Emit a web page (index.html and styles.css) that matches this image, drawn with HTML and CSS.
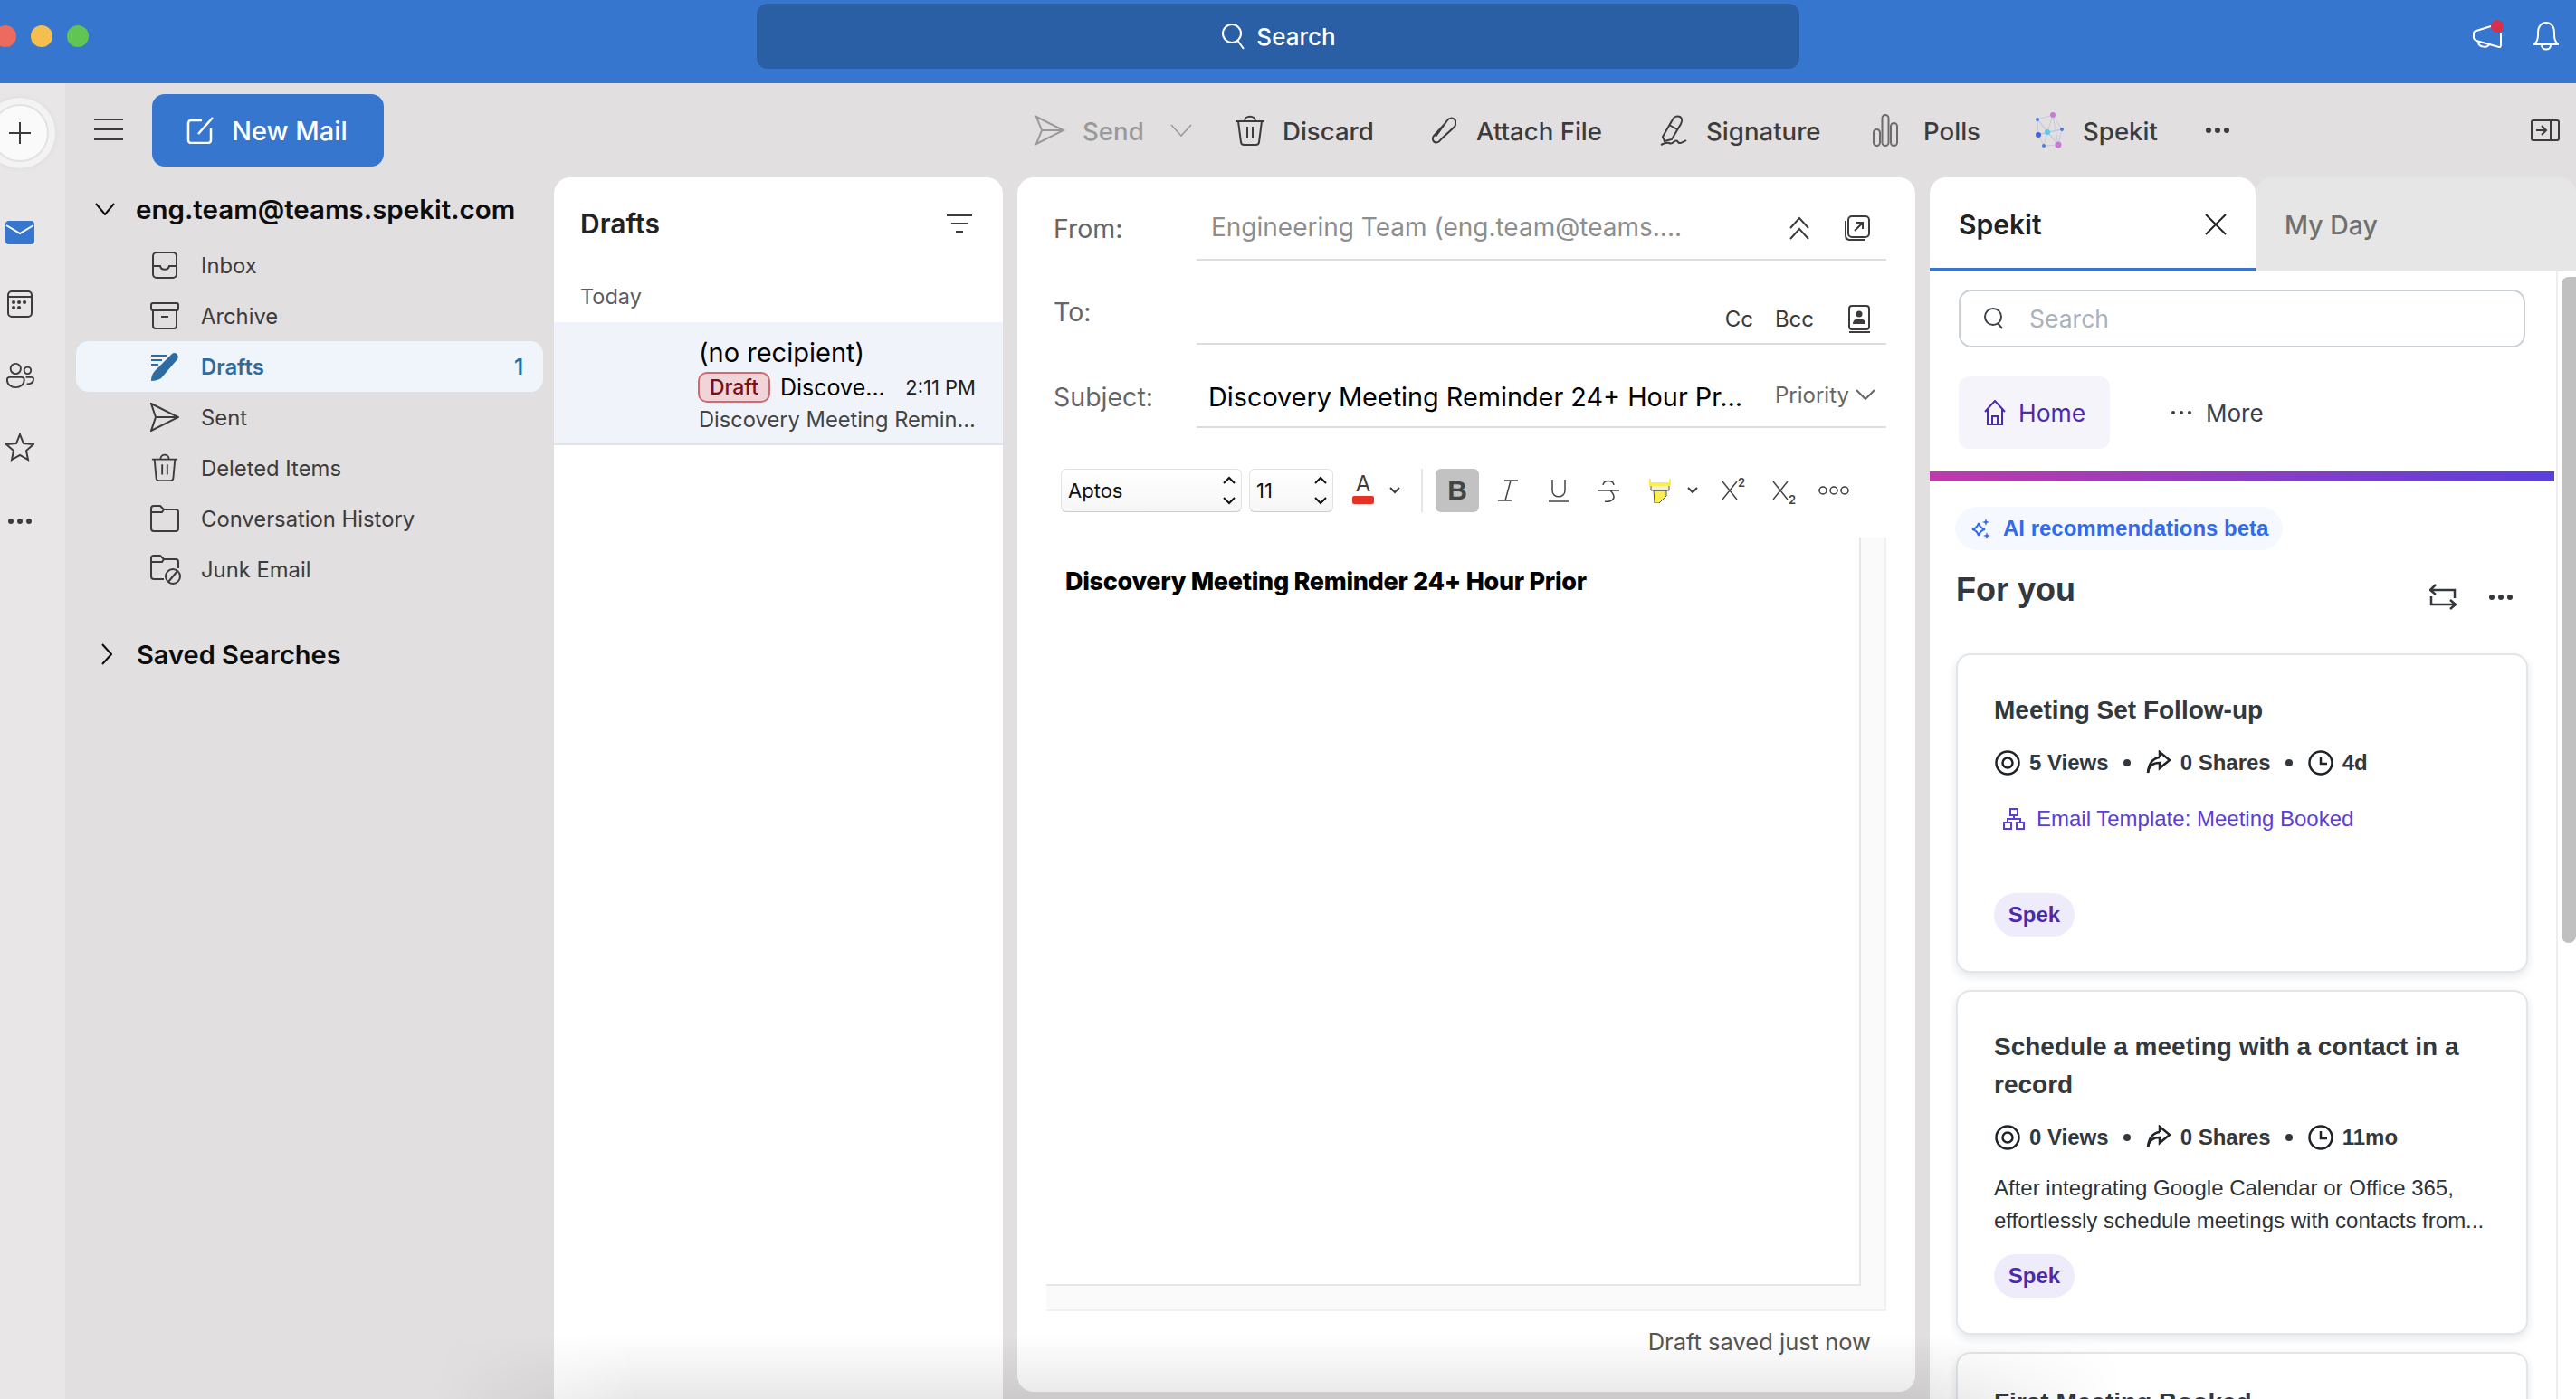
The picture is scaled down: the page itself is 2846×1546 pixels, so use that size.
FILE: index.html
```html
<!DOCTYPE html>
<html lang="en">
<head>
    <meta charset="UTF-8">
    <meta name="viewport" content="width=device-width, initial-scale=1.0">
    <title>Mail - Drafts</title>
    <link rel="stylesheet" href="styles.css">
</head>
<body>
<div class="app">
    <!-- Title bar -->
    <header class="titlebar">
        <div class="lights">
            <span class="light red"></span>
            <span class="light yellow"></span>
            <span class="light green"></span>
        </div>
        <div class="top-search">
            <svg class="ic ic-30" viewBox="0 0 30 30"><circle cx="13" cy="12" r="10"/><path d="M19.5 20L26 29"/></svg>
            <span>Search</span>
        </div>
        <div class="top-icons">
            <div class="megaphone">
                <svg class="ic ic-34" viewBox="0 0 34 26"><path d="M20 2L4 7c-2 .5-3 2-3 3v5c0 1 1 2 3 3l25 7c1 .2 2-.5 2-2V10"/><path d="M6 19c0 7 11 7 12 3"/></svg>
                <span class="megaphone-dot"></span>
            </div>
            <svg class="ic ic-bell" viewBox="0 0 28 32"><path d="M1 25c3-3 4-5 4-10V12C5 5 9 1 14 1s9 4 9 11v3c0 5 1 7 4 10z"/><path d="M9 26c0 6 10 6 10 0"/></svg>
        </div>
    </header>

    <div class="main">
        <!-- App rail -->
        <nav class="rail">
            <div class="plus">
                <svg class="ic ic-24" viewBox="0 0 24 24"><path d="M12 0v24M0 12h24"/></svg>
            </div>
            <svg class="rail-icon" viewBox="0 0 32 32"><rect class="mail-fill" x="0" y="3" width="32" height="26" rx="4"/><path class="mail-v" d="M1 8l15 9 15-9"/></svg>
            <svg class="ic rail-icon" viewBox="0 0 32 32"><rect x="3" y="2" width="26" height="28" rx="4"/><path d="M3 8h26"/><path class="dots" d="M9 14h.1M15 14h.1M21 14h.1M9 20h.1M15 20h.1"/></svg>
            <svg class="ic rail-icon" viewBox="0 0 34 32"><circle cx="12" cy="8" r="6"/><circle cx="26" cy="10" r="4"/><path d="M2 21c0-2 1-3 3-3h14c2 0 3 1 3 3 0 6-5 9-10 9S2 27 2 21z"/><path d="M24 18h6c2 0 3 1 3 2 0 4-3 6-8 6"/></svg>
            <svg class="ic rail-icon" viewBox="0 0 32 32"><path d="M16 2l4 10 11 1-8 7 2 10-9-5-9 5 2-10-8-7 11-1z"/></svg>
            <div class="dots-h rail-dots"><i></i><i></i><i></i></div>
        </nav>

        <div class="content">
            <!-- Ribbon -->
            <div class="ribbon">
                <svg class="ic hamburger" viewBox="0 0 32 24"><path d="M0 1h32M0 12h32M0 23h32"/></svg>
                <button class="new-mail">
                    <svg class="ic new-mail-icon" viewBox="0 0 30 30"><path d="M17 4H5a3 3 0 0 0-3 3v19a3 3 0 0 0 3 3h19a3 3 0 0 0 3-3V13"/><path d="M13 19L29 1"/></svg>
                    <span>New Mail</span>
                </button>
                <div class="tool tool-send">
                    <svg class="ic ic-34" viewBox="0 0 34 34"><path d="M2 2l30 15L2 32l6-15zM8 17h24"/></svg>
                    <span>Send</span>
                    <svg class="ic send-caret" viewBox="0 0 24 14"><path d="M1 1l11 12L23 1"/></svg>
                </div>
                <div class="tool tool-discard">
                    <svg class="ic ic-34" viewBox="0 0 34 34"><path d="M1 7h32M11 7c0-7 12-7 12 0"/><path d="M4 7l3 23c.200 2 1.500 3 3.500 3h13c2 0 3.300-1 3.500-3l3-23"/><path d="M14 13v13M20 13v13"/></svg>
                    <span>Discard</span>
                </div>
                <div class="tool tool-attach">
                    <svg class="ic ic-28" viewBox="0 0 28 30"><path d="M5 22L18 4c2-3 6-3 8-1s2 5 0 8L11 25c-2 3-5 4-7 3s-3-4-1-7L16 7"/></svg>
                    <span>Attach File</span>
                </div>
                <div class="tool tool-signature">
                    <svg class="ic ic-34" viewBox="0 0 34 34"><path d="M5 24L16 5c2-4 6-4 8-3s3 4 1 8L15 27l-8 2zM12 11l9 5"/><path d="M3 33c4-2 7-3 9-2s3 1 5-1 4-2 5 0 4 1 9-2"/></svg>
                    <span>Signature</span>
                </div>
                <div class="tool tool-polls">
                    <svg class="ic ic-polls" viewBox="0 0 28 36"><rect x="1" y="17" width="7" height="18" rx="3.500"/><rect x="10.500" y="1" width="7" height="34" rx="3.500"/><rect x="20" y="10" width="7" height="25" rx="3.500"/></svg>
                    <span>Polls</span>
                </div>
                <div class="tool tool-spekit">
                    <svg class="spekit-logo" viewBox="0 0 34 40">
                        <path class="net" d="M3 8L20 3 30 19 26 36 10 37 4 25zM3 8l11 14 16-3M20 3L14 22 10 37M4 25l10-3 12 14M3 8l23 28M20 3l6 33M4 25L30 19"/>
                        <circle class="dot-pink" cx="20" cy="3" r="3"/>
                        <circle class="dot-blue" cx="3" cy="8" r="2"/>
                        <circle class="dot-blue" cx="30" cy="19" r="2"/>
                        <circle class="dot-dark" cx="4" cy="25" r="3"/>
                        <circle class="dot-cyan" cx="14" cy="22" r="3"/>
                        <circle class="dot-pink" cx="26" cy="36" r="3.500"/>
                        <circle class="dot-blue" cx="10" cy="37" r="2"/>
                    </svg>
                    <span>Spekit</span>
                </div>
                <div class="dots-h tool-more"><i></i><i></i><i></i></div>
                <svg class="ic panel-toggle" viewBox="0 0 32 24"><rect x="1" y="1" width="30" height="22" rx="2"/><path d="M22 1v22M6 12h11M12 7l5 5-5 5"/></svg>
            </div>

            <div class="panes">
                <!-- Folder tree -->
                <aside class="folders">
                    <div class="account">
                        <svg class="ic account-chevron" viewBox="0 0 22 14"><path d="M1 1l10 12L21 1"/></svg>
                        <span>eng.team@teams.spekit.com</span>
                    </div>
                    <ul class="folder-list">
                        <li class="folder">
                            <svg class="ic ic-32" viewBox="0 0 32 32"><rect x="3" y="2" width="26" height="28" rx="4"/><path d="M3 17h8c1 5 9 5 10 0h8"/></svg>
                            <span>Inbox</span>
                        </li>
                        <li class="folder">
                            <svg class="ic ic-32" viewBox="0 0 32 32"><rect x="1" y="2" width="30" height="8" rx="2"/><path d="M3 10v17a3 3 0 0 0 3 3h20a3 3 0 0 0 3-3V10M12 17h8"/></svg>
                            <span>Archive</span>
                        </li>
                        <li class="folder active">
                            <svg class="ic-32 drafts-icon" viewBox="0 0 32 32"><path d="M1 3h17v2H1zM1 8h12v2H1zM1 13h8v2H1z"/><path d="M24 2c2-2 5-1 6 1s1 3 0 5L12 29c-3 2-7 3-11 3 0-4 1-8 4-11z"/></svg>
                            <span>Drafts</span>
                            <b class="count">1</b>
                        </li>
                        <li class="folder">
                            <svg class="ic ic-32" viewBox="0 0 32 32"><path d="M1 1l30 15L1 31l5-15zM6 16h25"/></svg>
                            <span>Sent</span>
                        </li>
                        <li class="folder">
                            <svg class="ic ic-32" viewBox="0 0 32 34"><path d="M1 7h30M11 7c0-7 10-7 10 0"/><path d="M4 7l2 22c.200 2 1.500 3 3.500 3h13c2 0 3.300-1 3.500-3l2-22"/><path d="M13 13v12M19 13v12"/></svg>
                            <span>Deleted Items</span>
                        </li>
                        <li class="folder">
                            <svg class="ic ic-32" viewBox="0 0 32 32"><path d="M1 5a3 3 0 0 1 3-3h7l4 4h13a3 3 0 0 1 3 3v18a3 3 0 0 1-3 3H4a3 3 0 0 1-3-3zM1 9h12l2-3"/></svg>
                            <span>Conversation History</span>
                        </li>
                        <li class="folder">
                            <svg class="ic ic-32 junk-icon" viewBox="0 0 34 34"><path d="M15 28H4a3 3 0 0 1-3-3V5a3 3 0 0 1 3-3h7l4 4h13a3 3 0 0 1 3 3v7M1 9h12l2-3"/><circle cx="25" cy="25" r="8"/><path d="M20 31l10-12"/></svg>
                            <span>Junk Email</span>
                        </li>
                    </ul>
                    <div class="account saved">
                        <svg class="ic saved-chevron" viewBox="0 0 12 24"><path d="M1 1l10 11L1 23"/></svg>
                        <span>Saved Searches</span>
                    </div>
                </aside>

                <!-- Message list -->
                <section class="list-pane">
                    <div class="list-head">
                        <h2>Drafts</h2>
                        <svg class="ic filter-icon" viewBox="0 0 28 20"><path d="M0 1h28M5 10h18M10 19h8"/></svg>
                    </div>
                    <div class="list-group">Today</div>
                    <div class="msg">
                        <div class="msg-to">(no recipient)</div>
                        <div class="msg-line">
                            <span class="draft-tag">Draft</span>
                            <span class="msg-subject">Discove...</span>
                            <span class="msg-time">2:11 PM</span>
                        </div>
                        <div class="msg-preview">Discovery Meeting Remin...</div>
                    </div>
                </section>

                <!-- Compose -->
                <section class="compose">
                    <div class="row row-from">
                        <label class="row-label">From:</label>
                        <div class="row-field">
                            <span class="from-value">Engineering Team (eng.team@teams....</span>
                            <svg class="ic double-up" viewBox="0 0 24 26"><path d="M2 13L12 2l10 11M2 25l10-11 10 11"/></svg>
                            <svg class="ic popout" viewBox="0 0 28 28"><rect x="4" y="1" width="23" height="23" rx="4"/><path d="M1 6v16c0 3 2 5 5 5h16M11 17l9-9M13 8h7v7"/></svg>
                        </div>
                    </div>
                    <div class="row row-to">
                        <label class="row-label">To:</label>
                        <div class="row-field">
                            <span class="cc">Cc</span>
                            <span class="bcc">Bcc</span>
                            <svg class="contact" viewBox="0 0 24 32"><rect class="contact-box" x="1" y="1" width="22" height="26" rx="3"/><path class="contact-line" d="M1 30h23"/><circle cx="12" cy="10" r="3.500"/><path d="M5 21c0-4 3-6 7-6s7 2 7 6z"/></svg>
                        </div>
                    </div>
                    <div class="row row-subject">
                        <label class="row-label">Subject:</label>
                        <div class="row-field">
                            <span class="subject-value">Discovery Meeting Reminder 24+ Hour Pr...</span>
                            <span class="priority">Priority</span>
                            <svg class="ic priority-caret" viewBox="0 0 22 12"><path d="M1 1l10 10L21 1"/></svg>
                        </div>
                    </div>

                    <div class="format-bar">
                        <div class="select select-font">
                            <span>Aptos</span>
                            <svg class="ic stepper" viewBox="0 0 14 32"><path d="M1 8l6-6 6 6M1 24l6 6 6-6"/></svg>
                        </div>
                        <div class="select select-size">
                            <span>11</span>
                            <svg class="ic stepper" viewBox="0 0 14 32"><path d="M1 8l6-6 6 6M1 24l6 6 6-6"/></svg>
                        </div>
                        <div class="font-color">
                            <span>A</span>
                            <i class="color-swatch"></i>
                        </div>
                        <svg class="ic mini-caret caret-color" viewBox="0 0 12 8"><path d="M1 1l5 5 5-5"/></svg>
                        <i class="format-sep"></i>
                        <div class="fmt-bold">B</div>
                        <svg class="ic fmt-icon fmt-italic" viewBox="0 0 24 26"><path d="M8 2h15M1 24h15M15 2L9 24"/></svg>
                        <svg class="ic fmt-icon fmt-under" viewBox="0 0 22 26"><path d="M4 1v12c0 9 14 9 14 0V1M0 25h22"/></svg>
                        <svg class="ic fmt-icon fmt-strike" viewBox="0 0 24 26"><path d="M0 13h24M18 7c-1-6-11-6-12 0M8 25c5 1 10-1 10-5 0-3-2-5-4-7"/></svg>
                        <svg class="highlighter" viewBox="0 0 24 28"><path class="hl-yellow" d="M0 1h2v4h20V1h2v8H0z"/><path class="hl-body" d="M2 9h20v5H2z"/><path class="hl-yellow" d="M5 14h14v6l-8 8H6z"/><path class="hl-line" d="M5 14h14v6l-8 8H6zM2 9v5h20V9"/></svg>
                        <svg class="ic mini-caret caret-hl" viewBox="0 0 12 8"><path d="M1 1l5 5 5-5"/></svg>
                        <div class="fmt-script fmt-sup">
                            <svg class="ic script-x" viewBox="0 0 18 20"><path d="M1 0l16 20M17 0L1 20"/></svg>
                            <span>2</span>
                        </div>
                        <div class="fmt-script fmt-sub">
                            <svg class="ic script-x" viewBox="0 0 18 20"><path d="M1 0l16 20M17 0L1 20"/></svg>
                            <span>2</span>
                        </div>
                        <svg class="ic fmt-more" viewBox="0 0 34 10"><circle cx="5" cy="5" r="4"/><circle cx="17" cy="5" r="4"/><circle cx="29" cy="5" r="4"/></svg>
                    </div>

                    <div class="editor-frame">
                        <div class="editor-body">
                            <p>Discovery Meeting Reminder 24+ Hour Prior</p>
                        </div>
                    </div>
                    <div class="draft-status">Draft saved just now</div>
                </section>

                <!-- Side panel -->
                <section class="side">
                    <div class="side-tabs">
                        <div class="side-tab current">
                            <span>Spekit</span>
                            <svg class="ic tab-close" viewBox="0 0 24 24"><path d="M1 1l22 22M23 1L1 23"/></svg>
                        </div>
                        <div class="side-tab other">My Day</div>
                    </div>
                    <div class="side-body">
                        <div class="side-main">
                            <div class="side-search">
                                <svg class="ic side-search-icon" viewBox="0 0 22 24"><circle cx="10" cy="10" r="9"/><path d="M15 17l5 6"/></svg>
                                <span>Search</span>
                            </div>
                            <div class="side-nav">
                                <div class="side-home">
                                    <svg class="ic home-icon" viewBox="0 0 24 28"><path d="M1 13L12 1l11 12M4 10v17h16V10M9 27v-9h6v9"/></svg>
                                    <span>Home</span>
                                </div>
                                <div class="side-more">
                                    <div class="dots-h small-dots"><i></i><i></i><i></i></div>
                                    <span>More</span>
                                </div>
                            </div>
                            <div class="grad-bar"></div>
                            <div class="ai-pill">
                                <svg class="ai-icon" viewBox="0 0 22 24"><path d="M9 6c1 4 3 6 7 7-4 1-6 3-7 7-1-4-3-6-7-7 4-1 6-3 7-7z"/><path class="ai-solid" d="M17 1l1 3 3 1-3 1-1 3-1-3-3-1 3-1zM18 16l1 3 3 1-3 1-1 3-1-3-3-1 3-1z"/></svg>
                                <span>AI recommendations beta</span>
                            </div>
                            <div class="for-you">
                                <h3>For you</h3>
                                <svg class="ic loop-icon" viewBox="0 0 30 30"><path d="M2 7h26v9M28 23H2v-9M7 1L1 7l6 5M23 18l6 5-6 5"/></svg>
                                <div class="dots-h for-you-dots"><i></i><i></i><i></i></div>
                            </div>

                            <article class="card">
                                <h4>Meeting Set Follow-up</h4>
                                <div class="meta">
                                    <svg class="ic meta-icon" viewBox="0 0 28 28"><circle cx="14" cy="14" r="12.500"/><circle cx="14" cy="14" r="5.500"/></svg>
                                    <span class="views">5 Views</span>
                                    <i class="bullet"></i>
                                    <svg class="ic meta-icon" viewBox="0 0 28 28"><path d="M2 25c1-8 6-11 13-11v6L26 11 15 2v6"/><path d="M15 8C7 9 3 15 2 25"/></svg>
                                    <span class="shares">0 Shares</span>
                                    <i class="bullet"></i>
                                    <svg class="ic meta-icon" viewBox="0 0 28 28"><circle cx="14" cy="14" r="12.500"/><path d="M14 7v8h7"/></svg>
                                    <span>4d</span>
                                </div>
                                <div class="card-link">
                                    <svg class="ic link-icon" viewBox="0 0 24 24"><rect x="8" y="1" width="8" height="7"/><rect x="1" y="16" width="8" height="7"/><rect x="15" y="16" width="8" height="7"/><path d="M12 8v4M5 16v-4h14v4"/></svg>
                                    <span>Email Template: Meeting Booked</span>
                                </div>
                                <span class="spek-tag">Spek</span>
                            </article>

                            <article class="card card-second">
                                <h4>Schedule a meeting with a contact in a record</h4>
                                <div class="meta">
                                    <svg class="ic meta-icon" viewBox="0 0 28 28"><circle cx="14" cy="14" r="12.500"/><circle cx="14" cy="14" r="5.500"/></svg>
                                    <span class="views">0 Views</span>
                                    <i class="bullet"></i>
                                    <svg class="ic meta-icon" viewBox="0 0 28 28"><path d="M2 25c1-8 6-11 13-11v6L26 11 15 2v6"/><path d="M15 8C7 9 3 15 2 25"/></svg>
                                    <span class="shares">0 Shares</span>
                                    <i class="bullet"></i>
                                    <svg class="ic meta-icon" viewBox="0 0 28 28"><circle cx="14" cy="14" r="12.500"/><path d="M14 7v8h7"/></svg>
                                    <span>11mo</span>
                                </div>
                                <p class="card-desc">After integrating Google Calendar or Office 365, effortlessly schedule meetings with contacts from...</p>
                                <span class="spek-tag">Spek</span>
                            </article>

                            <article class="card card-third">
                                <h4>First Meeting Booked</h4>
                            </article>
                        </div>
                        <div class="scroll-track"><div class="scroll-thumb"></div></div>
                    </div>
                </section>
            </div>
        </div>
    </div>
    <div class="bottom-shade"></div>
</div>
</body>
</html>
```

FILE: styles.css
```css
* {
    box-sizing: border-box;
}

html, body {
    margin: 0;
    height: 100%;
    overflow: hidden;
}

body {
    font-family: Inter, "Noto Sans", sans-serif;
    color: #3d3b3c;
    background-color: #e1dfe0;
}

h2, h3, h4, p, ul {
    margin: 0;
    padding: 0;
}

ul {
    list-style: none;
}

.app {
    position: relative;
    display: flex;
    flex-direction: column;
    height: 1546px;
    overflow: hidden;
}

/* generic icon */
.ic {
    fill: none;
    stroke: currentColor;
    stroke-width: 2;
    flex-shrink: 0;
}

.ic-24 { width: 24px; height: 24px; }
.ic-28 { width: 28px; height: 30px; }
.ic-30 { width: 30px; height: 30px; }
.ic-32 { width: 32px; height: 32px; }
.ic-34 { width: 34px; height: 34px; }

.dots-h {
    display: flex;
    gap: 6px;
}

.dots-h i {
    width: 6px;
    height: 6px;
    border-radius: 50%;
    background-color: #3d3b3c;
}

/* title bar */
.titlebar {
    display: flex;
    align-items: center;
    height: 92px;
    flex-shrink: 0;
    padding-bottom: 12px;
    background-color: #3676cf;
}

.lights {
    display: flex;
    gap: 16px;
    width: 98px;
    margin-left: -6px;
    flex-shrink: 0;
}

.light {
    width: 24px;
    height: 24px;
    border-radius: 50%;
    flex-shrink: 0;
}

.light.red { background-color: #ed6a5e; }
.light.yellow { background-color: #f5bf4f; }
.light.green { background-color: #61c554; }

.top-search {
    display: flex;
    align-items: center;
    justify-content: center;
    gap: 10px;
    width: 1152px;
    height: 72px;
    margin-left: 744px;
    border-radius: 12px;
    background-color: #2a5fa5;
    color: #fff;
    font-size: 26px;
    font-weight: 500;
}

.top-icons {
    display: flex;
    align-items: center;
    gap: 33px;
    margin-left: auto;
    margin-right: 19px;
    color: #fff;
}

.megaphone {
    position: relative;
    display: flex;
}

.megaphone .ic {
    height: 26px;
}

.megaphone-dot {
    position: absolute;
    top: -5px;
    right: 0;
    width: 14px;
    height: 14px;
    border-radius: 50%;
    background-color: #d7304b;
}

.ic-bell {
    width: 28px;
    height: 32px;
}

/* main area */
.main {
    display: flex;
    flex: 1;
    min-height: 0;
}

.rail {
    display: flex;
    flex-direction: column;
    width: 72px;
    flex-shrink: 0;
    padding-top: 23px;
    background-color: #e8e6e7;
}

.plus {
    display: flex;
    align-items: center;
    justify-content: center;
    width: 64px;
    height: 64px;
    margin-left: -10px;
    margin-bottom: 62px;
    border: 2px solid #e2e2e2;
    border-radius: 50%;
    background-color: #fafafa;
    box-shadow: 0 0 0 7px #f4f3f3, 0 0 6px 8px rgba(0, 0, 0, 0.04);
}

.rail-icon {
    width: 32px;
    height: 32px;
    margin: 0 0 47px 6px;
}

.mail-fill {
    fill: #3676cf;
}

.mail-v {
    fill: none;
    stroke: #fff;
    stroke-width: 2;
}

.rail .dots {
    stroke-width: 4;
    stroke-linecap: round;
}

.rail-dots {
    margin: 16px 0 0 9px;
    gap: 4px;
}

.content {
    display: flex;
    flex-direction: column;
    flex: 1;
    min-width: 0;
}

/* ribbon */
.ribbon {
    display: flex;
    align-items: center;
    height: 104px;
    flex-shrink: 0;
    padding-left: 32px;
    font-size: 27.600px;
    font-weight: 500;
}

.hamburger {
    width: 32px;
    height: 24px;
    margin-top: -2px;
}

.new-mail {
    display: flex;
    align-items: center;
    gap: 20px;
    width: 256px;
    height: 80px;
    margin-left: 32px;
    padding: 0 0 0 38px;
    border: none;
    border-radius: 14px;
    background-color: #3676cf;
    color: #fff;
    font-family: inherit;
    font-size: 29px;
    font-weight: 500;
}

.new-mail-icon {
    width: 30px;
    height: 30px;
    stroke-width: 2.500;
}

.tool {
    display: flex;
    align-items: center;
    gap: 19px;
    flex-shrink: 0;
}

.tool span {
    margin-top: 2px;
}

.tool-send {
    width: 221px;
    margin-left: 719px;
    color: #999;
}

.send-caret {
    width: 24px;
    height: 14px;
    margin-left: 10px;
    stroke-width: 1.500;
}

.tool-discard { width: 217px; }
.tool-attach { width: 251px; gap: 22px; }
.tool-signature { width: 237px; }
.tool-polls { width: 179px; gap: 28px; }
.tool-spekit { width: 189px; }

.ic-polls { width: 28px; height: 36px; color: #6e6c6d; }

.spekit-logo {
    width: 34px;
    height: 40px;
}

.net {
    fill: none;
    stroke: #b5b8d8;
    stroke-width: 0.600;
}

.dot-pink { fill: #c87ad6; }
.dot-blue { fill: #4a7ae0; }
.dot-dark { fill: #3f63e0; }
.dot-cyan { fill: #5cc8ea; }

.tool-more {
    gap: 4px;
}

.panel-toggle {
    width: 32px;
    height: 24px;
    margin-left: auto;
    margin-right: 18px;
}

/* panes */
.panes {
    display: flex;
    flex: 1;
    min-height: 0;
}

.folders {
    width: 540px;
    flex-shrink: 0;
    padding-top: 7px;
}

.account {
    display: flex;
    align-items: center;
    height: 56px;
    margin-bottom: 6px;
    padding-left: 33px;
    color: #0d0d0d;
    font-size: 29.500px;
    font-weight: 600;
}

.account span {
    margin-left: 23px;
}

.account-chevron {
    width: 22px;
    height: 14px;
}

.folder {
    display: flex;
    align-items: center;
    gap: 24px;
    height: 56px;
    margin-left: 12px;
    width: 516px;
    padding-left: 82px;
    padding-right: 22px;
    border-radius: 14px;
    font-size: 23.800px;
}

.folder.active {
    background-color: #f0f5fb;
    color: #2d6ba3;
    font-weight: 600;
}

.drafts-icon {
    fill: #2d6ba3;
}

.count {
    margin-left: auto;
    font-weight: 600;
}

.junk-icon {
    width: 34px;
    height: 34px;
    margin-right: -2px;
}

.account.saved {
    margin-top: 38px;
    padding-left: 40px;
    font-size: 29px;
}

.saved span {
    margin-left: 27px;
}

.saved-chevron {
    width: 12px;
    height: 24px;
}

/* message list */
.list-pane {
    display: flex;
    flex-direction: column;
    width: 496px;
    flex-shrink: 0;
    border-radius: 18px 18px 0 0;
    background-color: #fff;
}

.list-head {
    display: flex;
    align-items: center;
    justify-content: space-between;
    height: 102px;
    padding: 0 34px 0 29px;
}

.list-head h2 {
    color: #222;
    font-size: 30px;
    font-weight: 600;
}

.filter-icon {
    width: 28px;
    height: 20px;
}

.list-group {
    height: 58px;
    padding: 13px 0 0 29px;
    color: #5e5c5d;
    font-size: 23.500px;
    line-height: 34px;
}

.msg {
    height: 136px;
    padding: 16px 30px 0 162px;
    border-bottom: 2px solid #e0e4e6;
    background-color: #f0f4fa;
    color: #000;
}

.msg-to {
    margin-left: -2px;
    font-size: 29px;
    line-height: 36px;
}

.msg-line {
    display: flex;
    align-items: center;
    margin-left: -3px;
    margin-top: 3px;
    height: 34px;
}

.draft-tag {
    display: flex;
    align-items: center;
    justify-content: center;
    width: 80px;
    height: 34px;
    border: 2px solid #cf6a72;
    border-radius: 10px;
    background-color: #f0d4d8;
    color: #7a1018;
    font-size: 23px;
    font-weight: 500;
}

.msg-subject {
    margin-left: 11px;
    font-size: 25px;
}

.msg-time {
    margin-left: auto;
    font-size: 22px;
    color: #222;
}

.msg-preview {
    margin-top: 2px;
    margin-left: -2px;
    color: #444;
    font-size: 23.700px;
    line-height: 34px;
    white-space: nowrap;
}

/* compose */
.compose {
    display: flex;
    flex-direction: column;
    width: 992px;
    height: 1342px;
    flex-shrink: 0;
    margin-left: 16px;
    margin-right: 16px;
    padding: 0 32px 0 40px;
    border-radius: 18px;
    background-color: #fff;
}

.row {
    display: flex;
    height: 92px;
    flex-shrink: 0;
}

.row-label {
    width: 158px;
    flex-shrink: 0;
    color: #666;
    font-size: 28.500px;
    line-height: 36px;
}

.row-from .row-label { padding-top: 39px; }
.row-to .row-label { padding-top: 39px; }
.row-subject .row-label { padding-top: 40px; }

.row-to { height: 93px; }

.row-field {
    display: flex;
    align-items: center;
    flex: 1;
    border-bottom: 2px solid #ddd;
}

.row-from .row-field { padding-top: 22px; }
.row-to .row-field { padding-top: 38px; }
.row-subject .row-field { padding-top: 24px; }

.from-value {
    margin-left: 16px;
    margin-top: -2px;
    color: #8e8e8e;
    font-size: 28px;
}

.double-up {
    width: 24px;
    height: 26px;
    margin-left: auto;
    margin-right: 38px;
}

.popout {
    width: 28px;
    height: 28px;
    margin-right: 18px;
}

.cc {
    margin-left: auto;
    font-size: 24px;
}

.bcc {
    margin-left: 24px;
    font-size: 24px;
}

.contact {
    width: 24px;
    height: 32px;
    margin-left: 38px;
    margin-right: 18px;
    fill: #3d3b3c;
}

.contact-box, .contact-line {
    fill: none;
    stroke: #3d3b3c;
    stroke-width: 2;
}

.subject-value {
    margin-left: 13px;
    color: #000;
    font-size: 28.800px;
}

.priority {
    margin-left: auto;
    margin-top: -4px;
    color: #666;
    font-size: 24px;
}

.priority-caret {
    width: 22px;
    height: 12px;
    margin-left: 7px;
    margin-right: 12px;
    margin-top: -4px;
    color: #666;
}

/* formatting toolbar */
.format-bar {
    display: flex;
    align-items: center;
    height: 48px;
    flex-shrink: 0;
    margin-top: 45px;
    margin-left: 8px;
}

.select {
    display: flex;
    align-items: center;
    justify-content: space-between;
    height: 48px;
    padding: 0 6px 0 7px;
    border: 1px solid #e2e2e2;
    border-bottom-color: #ccc;
    border-radius: 6px;
    background: linear-gradient(#fff, #f6f6f6);
    color: #111;
    font-size: 22px;
}

.select-font { width: 200px; }
.select-size { width: 93px; margin-left: 8px; }

.stepper {
    width: 14px;
    height: 32px;
    stroke-width: 2;
}

.font-color {
    display: flex;
    flex-direction: column;
    align-items: center;
    width: 24px;
    margin-left: 21px;
    font-size: 24px;
    line-height: 26px;
    margin-top: -6px;
}

.color-swatch {
    width: 24px;
    height: 9px;
    margin-top: 0;
    border-radius: 2px;
    background-color: #e53224;
}

.mini-caret {
    width: 12px;
    height: 8px;
    stroke-width: 2;
}

.caret-color { margin-left: 17px; }

.format-sep {
    width: 2px;
    height: 48px;
    margin-left: 23px;
    background-color: #e6e6e6;
}

.fmt-bold {
    display: flex;
    align-items: center;
    justify-content: center;
    width: 48px;
    height: 48px;
    flex-shrink: 0;
    margin-left: 14px;
    border-radius: 6px;
    background-color: #c2c2c2;
    color: #444;
    font-family: "Liberation Sans", Arial, sans-serif;
    font-size: 30px;
    font-weight: 700;
}

.fmt-icon {
    height: 26px;
    color: #444;
    stroke-width: 1.500;
}

.fmt-italic { width: 24px; margin-left: 20px; }
.fmt-under { width: 22px; margin-left: 33px; }
.fmt-strike { width: 24px; margin-left: 32px; }

.highlighter {
    width: 24px;
    height: 28px;
    margin-left: 33px;
}

.hl-yellow { fill: #fbee4d; }
.hl-body { fill: #f0efe0; }
.hl-line { fill: none; stroke: #555; stroke-width: 1; }

.caret-hl { margin-left: 18px; }

.fmt-script {
    display: flex;
    width: 28px;
    height: 32px;
    flex-shrink: 0;
    color: #444;
    font-size: 13px;
    font-weight: 600;
    line-height: 13px;
}

.script-x {
    width: 18px;
    height: 20px;
    margin-top: 6px;
    stroke-width: 1.500;
}

.fmt-sup { margin-left: 26px; }
.fmt-sup span { margin-top: 1px; }

.fmt-sub { margin-left: 28px; }
.fmt-sub span { margin-top: 20px; }

.fmt-more {
    width: 34px;
    height: 10px;
    margin-left: 23px;
    stroke-width: 1.500;
}

/* editor */
.editor-frame {
    flex: 1;
    min-height: 0;
    margin-top: 28px;
    margin-left: -8px;
    padding: 0 26px 26px 0;
    border-right: 2px solid #f0f0f0;
    border-bottom: 2px solid #f0f0f0;
    background-color: #fafafa;
}

.editor-body {
    height: 100%;
    padding: 30px 21px;
    border-right: 2px solid #e6e6e6;
    border-bottom: 2px solid #e6e6e6;
    background-color: #fff;
}

.editor-body p {
    color: #000;
    font-size: 27px;
    font-weight: 800;
    letter-spacing: -0.300px;
    line-height: 38px;
}

.draft-status {
    height: 89px;
    flex-shrink: 0;
    padding: 17px 17px 0 0;
    color: #555;
    font-size: 25.500px;
    line-height: 34px;
    text-align: right;
}

/* side panel */
.side {
    display: flex;
    flex-direction: column;
    flex: 1;
    min-width: 0;
}

.side-tabs {
    display: flex;
    height: 104px;
    flex-shrink: 0;
}

.side-tab {
    display: flex;
    align-items: center;
    font-size: 30px;
}

.side-tab.current {
    justify-content: space-between;
    width: 360px;
    padding: 4px 32px 0 32px;
    border-bottom: 4px solid #3676cf;
    border-radius: 18px 18px 0 0;
    background-color: #fff;
    color: #222;
    font-weight: 600;
}

.side-tab.other {
    flex: 1;
    padding-left: 32px;
    border-radius: 18px 18px 0 0;
    background-color: #e6e6e6;
    color: #707070;
    font-size: 28.500px;
    font-weight: 500;
}

.tab-close {
    width: 24px;
    height: 24px;
}

.side-body {
    display: flex;
    flex: 1;
    min-height: 0;
    background-color: #fff;
}

.side-main {
    width: 692px;
    flex-shrink: 0;
    padding-top: 20px;
    overflow: hidden;
    font-family: "Liberation Sans", Arial, sans-serif;
}

.scroll-track {
    flex: 1;
    padding: 6px 0 0 4px;
    border-left: 2px solid #eee;
}

.scroll-thumb {
    height: 736px;
    border-radius: 8px 0 8px 8px;
    background-color: #c0c0c0;
}

.side-search {
    display: flex;
    align-items: center;
    width: 626px;
    height: 64px;
    margin-left: 32px;
    padding-left: 26px;
    border: 2px solid #ccd2d8;
    border-radius: 14px;
    color: #a9b2bb;
    font-size: 26.500px;
    font-family: Inter, sans-serif;
}

.side-search-icon {
    width: 22px;
    height: 24px;
    margin-right: 28px;
    color: #3c4146;
}

.side-nav {
    display: flex;
    align-items: center;
    height: 80px;
    margin-top: 32px;
    margin-left: 32px;
    font-size: 26.500px;
    font-family: Inter, sans-serif;
}

.side-home {
    display: flex;
    align-items: center;
    gap: 14px;
    width: 167px;
    height: 80px;
    padding-left: 28px;
    border-radius: 12px;
    background-color: #f5f4fb;
    color: #4a2bb0;
}

.home-icon {
    width: 24px;
    height: 28px;
}

.side-more {
    display: flex;
    align-items: center;
    gap: 16px;
    margin-left: 68px;
    color: #3c4146;
    font-size: 26px;
}

.small-dots {
    gap: 5px;
}

.small-dots i {
    width: 4px;
    height: 4px;
}

.grad-bar {
    width: 690px;
    height: 11px;
    margin-top: 25px;
    background: linear-gradient(90deg, #c03aab, #5b3fdc);
}

.ai-pill {
    display: inline-flex;
    align-items: center;
    gap: 14px;
    height: 48px;
    margin-top: 28px;
    margin-left: 28px;
    padding: 0 16px 0 17px;
    border-radius: 24px;
    background-color: #f5f8fe;
    color: #2f6bf0;
    font-size: 24px;
    font-weight: 700;
}

.ai-icon {
    width: 22px;
    height: 24px;
    fill: none;
    stroke: #2f6bf0;
    stroke-width: 2;
}

.ai-solid {
    fill: #2f6bf0;
    stroke: none;
}

.for-you {
    display: flex;
    align-items: center;
    height: 72px;
    margin-left: 29px;
    margin-bottom: 34px;
    margin-top: 8px;
}

.for-you h3 {
    color: #32383e;
    font-size: 36px;
    font-weight: 700;
}

.loop-icon {
    width: 30px;
    height: 30px;
    margin-left: auto;
    color: #32383e;
    stroke-width: 2.500;
    margin-top: 16px;
}

.for-you-dots {
    gap: 4px;
    margin-left: 36px;
    margin-right: 48px;
    margin-top: 16px;
}

.for-you-dots i {
    background-color: #32383e;
}

.card {
    width: 632px;
    height: 353px;
    margin-left: 29px;
    margin-bottom: 19px;
    padding: 40px 40px 0;
    border: 2px solid #e1e6ea;
    border-radius: 16px;
    background-color: #fff;
    box-shadow: 0 4px 10px rgba(30, 50, 70, 0.120);
    color: #32383e;
}

.card h4 {
    font-size: 28px;
    font-weight: 700;
    line-height: 42px;
}

.meta {
    display: flex;
    align-items: center;
    gap: 10px;
    height: 32px;
    margin-top: 21px;
    margin-left: 1px;
    font-size: 24px;
    font-weight: 700;
}

.meta-icon {
    width: 28px;
    height: 28px;
    stroke-width: 2.500;
    color: #1e2328;
}

.bullet {
    width: 8px;
    height: 8px;
    margin: 0 7px 0 6px;
    border-radius: 50%;
    background-color: #32383e;
}

.card-link {
    display: flex;
    align-items: center;
    gap: 13px;
    height: 36px;
    margin-top: 28px;
    margin-left: 10px;
    color: #5b3dd8;
    font-size: 24px;
}

.link-icon {
    width: 24px;
    height: 24px;
}

.spek-tag {
    display: flex;
    align-items: center;
    justify-content: center;
    width: 89px;
    height: 48px;
    margin-top: 64px;
    border-radius: 24px;
    background-color: #eeebfa;
    color: #4a2bb0;
    font-size: 24px;
    font-weight: 700;
}

.card-second {
    height: 381px;
}

.card-desc {
    margin-top: 22px;
    color: #2d3339;
    font-size: 24px;
    line-height: 36px;
}

.card-second .spek-tag {
    margin-top: 19px;
}

.card-third {
    height: 200px;
    padding-top: 33px;
}

/* dock shadow along the bottom edge */
.bottom-shade {
    position: absolute;
    left: 480px;
    right: 500px;
    bottom: 0;
    height: 72px;
    background: linear-gradient(rgba(0, 0, 0, 0), rgba(0, 0, 0, 0.090));
    -webkit-mask-image: linear-gradient(90deg, transparent, #000 12%, #000 88%, transparent);
    mask-image: linear-gradient(90deg, transparent, #000 12%, #000 88%, transparent);
    pointer-events: none;
}
```
